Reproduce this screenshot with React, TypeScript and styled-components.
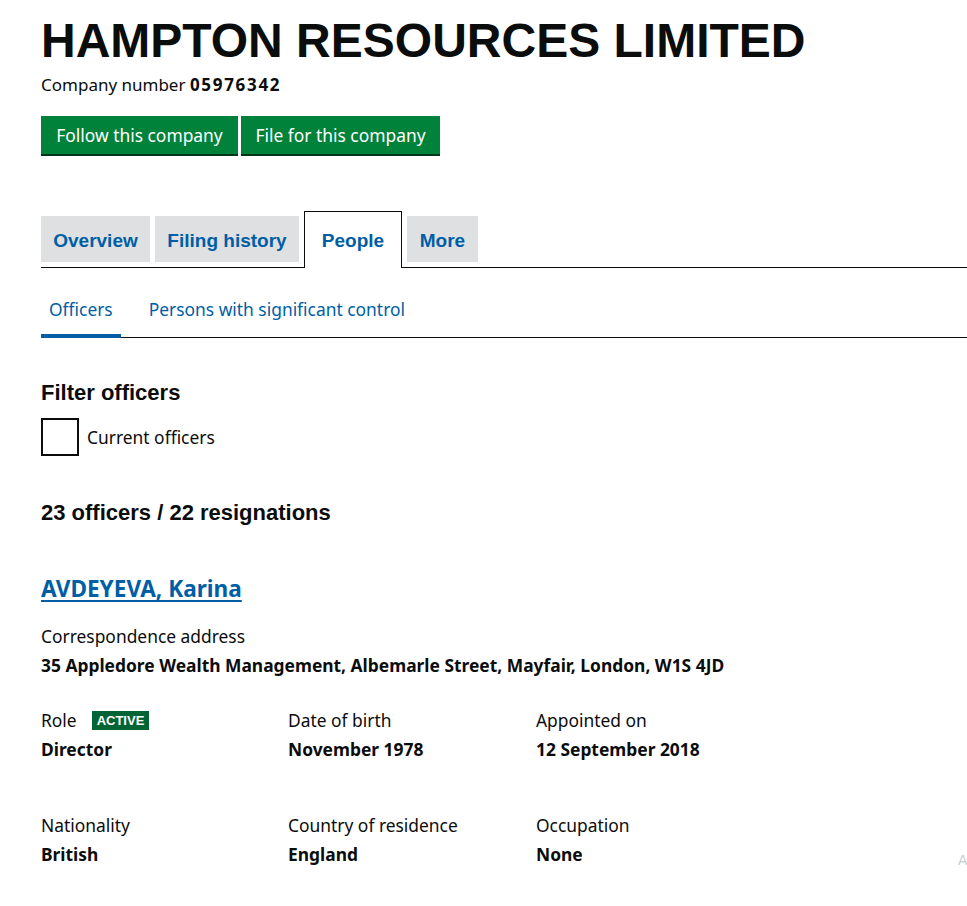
import styled, { createGlobalStyle } from "styled-components";

const Global = createGlobalStyle`
  body {
    margin: 0;
    background: #fff;
    color: #0b0c0c;
    font-family: "Noto Sans", Arial, sans-serif;
  }
`;

const body = `"Noto Sans", "Liberation Sans", Arial, sans-serif`;
const heading = `"Liberation Sans", Arial, sans-serif`;

const Page = styled.main`
  padding: 14px 0 40px 41px;
  overflow: hidden;
`;

const Title = styled.h1`
  font-family: ${heading};
  font-weight: 700;
  font-size: 48px;
  line-height: 54px;
  margin: 0;
`;

const CompanyNumber = styled.p`
  font-family: ${body};
  font-size: 17px;
  margin: 5px 0 0;
  strong {
    font-weight: 700;
    letter-spacing: 1.7px;
  }
`;

const Actions = styled.div`
  display: flex;
  gap: 3px;
  margin-top: 20px;
`;

const GreenButton = styled.a<{ width: number }>`
  display: flex;
  align-items: center;
  justify-content: center;
  box-sizing: border-box;
  width: ${(p) => p.width}px;
  height: 38px;
  background: #00823b;
  color: #fff;
  font-family: ${body};
  font-size: 17.4px;
  box-shadow: 0 2px 0 #003618;
  padding-bottom: 1px;
`;

const Tabs = styled.nav`
  display: flex;
  align-items: flex-end;
  gap: 5px;
  margin-top: 57px;
  border-bottom: 1px solid #0b0c0c;
`;

const Tab = styled.a<{ active?: boolean; width: number }>`
  box-sizing: border-box;
  width: ${(p) => p.width}px;
  height: ${(p) => (p.active ? 57 : 46)}px;
  display: flex;
  align-items: center;
  justify-content: center;
  font-family: ${heading};
  font-weight: 700;
  font-size: 19px;
  color: #005ea5;
  background: ${(p) => (p.active ? "#fff" : "#dee0e2")};
  border: ${(p) => (p.active ? "1px solid #0b0c0c" : "none")};
  border-bottom: none;
  margin-bottom: ${(p) => (p.active ? "-1px" : "5px")};
  padding-top: ${(p) => (p.active ? "2px" : "4px")};
`;

const SubTabs = styled.nav`
  display: flex;
  margin-top: 19px;
  border-bottom: 1px solid #0b0c0c;
`;

const SubTab = styled.a<{ active?: boolean }>`
  font-family: ${body};
  font-size: 17.4px;
  color: #005ea5;
  padding: 10px 8px 13px;
  margin-right: 20px;
  border-bottom: 4px solid ${(p) => (p.active ? "#005ea5" : "transparent")};
  margin-bottom: -1px;
`;

const SectionHeading = styled.h2<{ gap: number }>`
  font-family: ${heading};
  font-weight: 700;
  font-size: 22px;
  line-height: 28px;
  margin: ${(p) => p.gap}px 0 0;
`;

const CheckRow = styled.label`
  display: flex;
  align-items: center;
  gap: 8px;
  margin-top: 11px;
  font-family: ${body};
  font-size: 17.4px;
`;

const Box = styled.span`
  box-sizing: border-box;
  width: 38px;
  height: 38px;
  border: 2px solid #0b0c0c;
`;

const OfficerName = styled.a`
  display: inline-block;
  margin-top: 46px;
  font-family: ${body};
  font-weight: 700;
  font-size: 22.6px;
  color: #005ea5;
  text-decoration: underline;
  text-underline-offset: 3px;
`;

const Label = styled.div`
  font-family: ${body};
  font-size: 17.4px;
  line-height: 24px;
  display: flex;
  align-items: center;
  gap: 15px;
`;

const Value = styled.div`
  font-family: ${body};
  font-size: 17.4px;
  font-weight: 700;
  line-height: 24px;
  margin-top: 5px;
`;

const Address = styled.div`
  margin-top: 20px;
`;

const Grid = styled.div<{ gap: number }>`
  display: grid;
  grid-template-columns: 247px 248px 247px;
  margin-top: ${(p) => p.gap}px;
`;

const Tag = styled.span`
  background: #006435;
  color: #fff;
  font-family: ${heading};
  font-weight: 700;
  font-size: 13px;
  line-height: 19px;
  padding: 0 5px;
  text-transform: uppercase;
`;

const EdgeHint = styled.span`
  position: absolute;
  left: 958px;
  top: 852px;
  color: #ccc;
  font-family: ${heading};
  font-size: 14px;
`;

export default function App() {
  return (
    <>
      <Global />
      <Page>
        <Title>HAMPTON RESOURCES LIMITED</Title>
        <CompanyNumber>
          Company number <strong>05976342</strong>
        </CompanyNumber>
        <Actions>
          <GreenButton width={197}>Follow this company</GreenButton>
          <GreenButton width={199}>File for this company</GreenButton>
        </Actions>
        <Tabs>
          <Tab width={109}>Overview</Tab>
          <Tab width={144}>Filing history</Tab>
          <Tab width={98} active>
            People
          </Tab>
          <Tab width={71}>More</Tab>
        </Tabs>
        <SubTabs>
          <SubTab active>Officers</SubTab>
          <SubTab>Persons with significant control</SubTab>
        </SubTabs>
        <SectionHeading gap={41}>Filter officers</SectionHeading>
        <CheckRow>
          <Box />
          Current officers
        </CheckRow>
        <SectionHeading gap={43}>23 officers / 22 resignations</SectionHeading>
        <OfficerName>AVDEYEVA, Karina</OfficerName>
        <Address>
          <Label>Correspondence address</Label>
          <Value>35 Appledore Wealth Management, Albemarle Street, Mayfair, London, W1S 4JD</Value>
        </Address>
        <Grid gap={31}>
          <div>
            <Label>
              Role <Tag>Active</Tag>
            </Label>
            <Value>Director</Value>
          </div>
          <div>
            <Label>Date of birth</Label>
            <Value>November 1978</Value>
          </div>
          <div>
            <Label>Appointed on</Label>
            <Value>12 September 2018</Value>
          </div>
        </Grid>
        <Grid gap={52}>
          <div>
            <Label>Nationality</Label>
            <Value>British</Value>
          </div>
          <div>
            <Label>Country of residence</Label>
            <Value>England</Value>
          </div>
          <div>
            <Label>Occupation</Label>
            <Value>None</Value>
          </div>
        </Grid>
      </Page>
      <EdgeHint>A</EdgeHint>
    </>
  );
}
